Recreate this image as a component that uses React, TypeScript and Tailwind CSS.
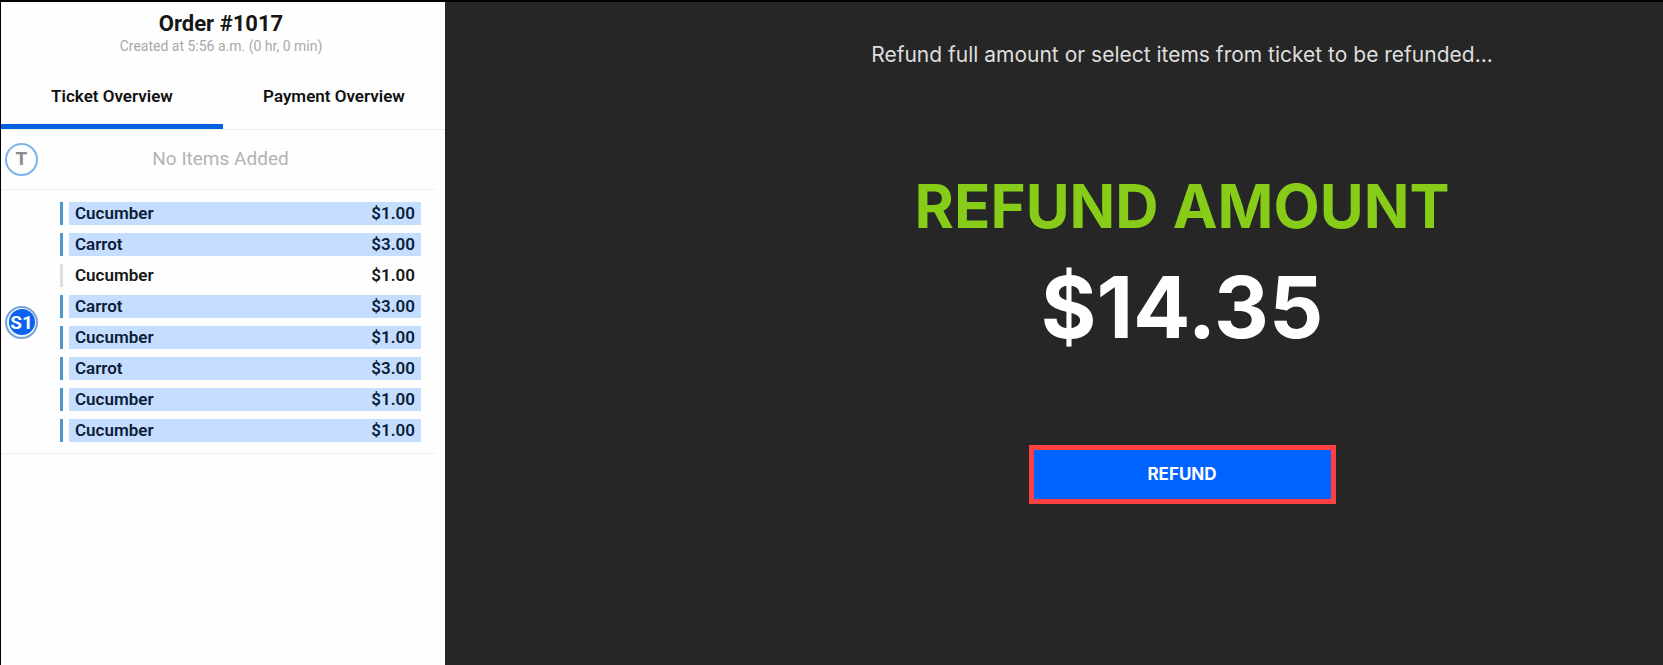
import { useState } from "react";

type Item = { id: number; name: string; price: number; selected: boolean };

const initialItems: Item[] = [
  { id: 1, name: "Cucumber", price: 1, selected: true },
  { id: 2, name: "Carrot", price: 3, selected: true },
  { id: 3, name: "Cucumber", price: 1, selected: false },
  { id: 4, name: "Carrot", price: 3, selected: true },
  { id: 5, name: "Cucumber", price: 1, selected: true },
  { id: 6, name: "Carrot", price: 3, selected: true },
  { id: 7, name: "Cucumber", price: 1, selected: true },
  { id: 8, name: "Cucumber", price: 1, selected: true },
];

function Tab({ label, active, onClick }: { label: string; active: boolean; onClick: () => void }) {
  return (
    <button
      type="button"
      role="tab"
      aria-selected={active}
      onClick={onClick}
      className={
        "flex h-16 flex-1 items-center justify-center border-b-5 pt-1 text-[17px] font-semibold text-[#111111] " +
        (active ? "border-[#0560e0]" : "border-transparent")
      }
    >
      {label}
    </button>
  );
}

function ItemRow({ item, onToggle }: { item: Item; onToggle: () => void }) {
  return (
    <li>
      <button type="button" aria-pressed={item.selected} onClick={onToggle} className="flex h-[23px] w-full gap-1.5">
        <span className={"h-full w-[3px] " + (item.selected ? "bg-[#4a98cc]" : "bg-[#dddde0]")} />
        <span
          className={
            "flex h-full flex-1 items-center justify-between px-1.5 text-[17px] leading-none font-semibold " +
            (item.selected ? "bg-[#c5deff] text-[#0c1d38]" : "bg-transparent text-[#161616]")
          }
        >
          <span>{item.name}</span>
          <span>${item.price.toFixed(2)}</span>
        </span>
      </button>
    </li>
  );
}

function Ticket() {
  const [tab, setTab] = useState("ticket");
  const [items, setItems] = useState(initialItems);
  const toggle = (id: number) =>
    setItems(items.map((i) => (i.id === id ? { ...i, selected: !i.selected } : i)));

  return (
    <aside className="w-[444px] shrink-0 bg-[#fefefe]">
      <header className="flex h-[63px] flex-col items-center pt-2 pr-1">
        <h1 className="text-[22px] leading-7 font-bold text-[#161616]">Order #1017</h1>
        <p className="text-[14px] leading-4 text-[#a9a9a9]">Created at 5:56 a.m. (0 hr, 0 min)</p>
      </header>
      <div role="tablist" className="flex border-b border-[#eeeeee]">
        <Tab label="Ticket Overview" active={tab === "ticket"} onClick={() => setTab("ticket")} />
        <Tab label="Payment Overview" active={tab === "payment"} onClick={() => setTab("payment")} />
      </div>
      <section className="mr-[10px] flex h-[60px] items-center border-b border-[#eeeeee] pl-1">
        <span className="flex size-[33px] items-center justify-center rounded-full border-2 border-[#7db4ec] text-[19px] font-bold text-[#8c8c8c]">
          T
        </span>
        <p className="flex-1 pr-8 text-center text-[19px] text-[#b3b3b3]">No Items Added</p>
      </section>
      <section className="mr-[10px] flex items-center border-b border-[#eeeeee] pt-3 pb-[11px] pl-1">
        <span className="flex size-[33px] items-center justify-center rounded-full border-2 border-[#7aa3d8] bg-[#eef5ff]">
          <span className="flex size-[26px] items-center justify-center rounded-full bg-[#0b62f0] text-[19px] leading-none font-bold text-white">
            S1
          </span>
        </span>
        <ul className="ml-[22px] flex flex-1 flex-col gap-2 pr-3.5">
          {items.map((i) => (
            <ItemRow key={i.id} item={i} onToggle={() => toggle(i.id)} />
          ))}
        </ul>
      </section>
    </aside>
  );
}

export default function App() {
  return (
    <div className="flex min-h-screen border-t-2 border-l border-black bg-[#262626] font-['Roboto',sans-serif]">
      <Ticket />
      <main className="flex flex-1 flex-col items-center pt-[37px] pl-64 font-['Inter',sans-serif]">
        <p className="text-[21px] leading-8 text-[#dedede]">
          Refund full amount or select items from ticket to be refunded...
        </p>
        <h2 className="mt-[103px] text-[60px] leading-[64px] font-bold text-[#86cc18]">REFUND AMOUNT</h2>
        <p className="mt-[22px] text-[85px] leading-[96px] font-bold text-white">$14.35</p>
        <button
          type="button"
          className="mt-[89px] flex h-[59px] w-[307px] items-center justify-center border-5 border-[#ff4040] bg-[#0062ff] text-[17px] font-bold text-white"
        >
          REFUND
        </button>
      </main>
    </div>
  );
}
